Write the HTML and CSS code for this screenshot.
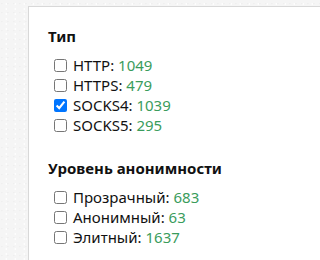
FILE: index.html
```html
<!DOCTYPE html>
<html lang="ru">
<head>
<meta charset="utf-8">
<link rel="stylesheet" href="styles.css">
</head>
<body>
<div class="panel">
  <section class="group">
    <h3 class="group-title">Тип</h3>
    <label class="opt"><input type="checkbox"><span>HTTP: <b class="num">1049</b></span></label>
    <label class="opt"><input type="checkbox"><span>HTTPS: <b class="num">479</b></span></label>
    <label class="opt"><input type="checkbox" checked><span>SOCKS4: <b class="num">1039</b></span></label>
    <label class="opt"><input type="checkbox"><span>SOCKS5: <b class="num">295</b></span></label>
  </section>
  <section class="group">
    <h3 class="group-title">Уровень анонимности</h3>
    <label class="opt"><input type="checkbox"><span>Прозрачный: <b class="num">683</b></span></label>
    <label class="opt"><input type="checkbox"><span>Анонимный: <b class="num">63</b></span></label>
    <label class="opt"><input type="checkbox"><span>Элитный: <b class="num">1637</b></span></label>
  </section>
</div>
</body>
</html>
```
FILE: styles.css
```css
html, body {
  margin: 0;
  height: 100%;
}
body {
  background-color: #f5f5f5;
  background-image:
    radial-gradient(circle at 30% 40%, rgba(0,0,0,0.025) 0.5px, transparent 1px),
    radial-gradient(circle at 70% 80%, rgba(255,255,255,0.8) 0.6px, transparent 1.2px);
  background-size: 6px 9px, 9px 5px;
  font-family: "Noto Sans", "Open Sans", sans-serif;
  color: #111;
  overflow: hidden;
}
.panel {
  margin: 6px 0 0 28px;
  background: #fff;
  border: 1px solid #d8d8d8;
  border-right: none;
  border-bottom: none;
  height: 100%;
  box-sizing: border-box;
  padding: 19px 0 0 19px;
}
.group {
  display: flex;
  flex-direction: column;
  margin-bottom: 23px;
}
.group-title {
  margin: 0 0 9px 0;
  font-size: 15px;
  font-weight: 700;
  line-height: 20px;
}
.opt {
  display: flex;
  align-items: center;
  height: 20px;
  font-size: 15px;
}
.opt input {
  margin: 0 6px 0 6px;
  width: 13px;
  height: 13px;
}
.num {
  font-weight: 400;
  color: #3a9c5c;
}
```
